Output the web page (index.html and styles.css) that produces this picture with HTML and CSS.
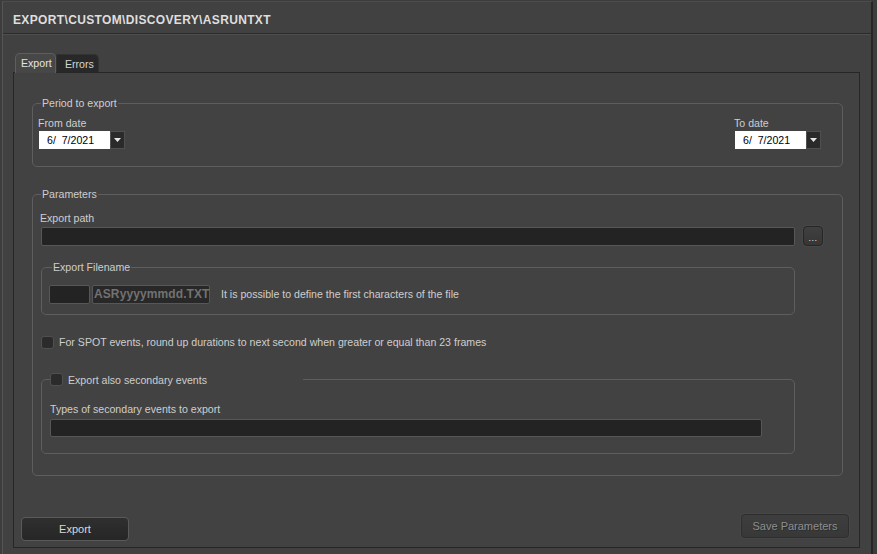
FILE: index.html
```html
<!DOCTYPE html>
<html>
<head>
<meta charset="utf-8">
<link rel="stylesheet" href="styles.css">
</head>
<body>
<div class="win">
  <div class="titlebar"><span class="title">EXPORT\CUSTOM\DISCOVERY\ASRUNTXT</span></div>
  <div class="content">
    <div class="tabs">
      <div class="tab active">Export</div>
      <div class="tab">Errors</div>
    </div>
    <div class="panel">
      <fieldset class="group period">
        <legend>Period to export</legend>
        <div class="period-row">
          <div class="datefield">
            <div class="lbl">From date</div>
            <div class="date"><span class="date-val">6/&nbsp;&nbsp;7/2021</span><span class="date-btn"><svg width="7" height="4" viewBox="0 0 7 4"><path d="M0 0H7L3.5 4Z" fill="#e6e6e6"/></svg></span></div>
          </div>
          <div class="datefield">
            <div class="lbl">To date</div>
            <div class="date"><span class="date-val">6/&nbsp;&nbsp;7/2021</span><span class="date-btn"><svg width="7" height="4" viewBox="0 0 7 4"><path d="M0 0H7L3.5 4Z" fill="#e6e6e6"/></svg></span></div>
          </div>
        </div>
      </fieldset>
      <fieldset class="group params">
        <legend>Parameters</legend>
        <div class="lbl">Export path</div>
        <div class="path-row">
          <div class="input path"></div>
          <div class="browse">...</div>
        </div>
        <fieldset class="group filename">
          <legend>Export Filename</legend>
          <div class="fn-row">
            <div class="input prefix"></div>
            <div class="input pattern">ASRyyyymmdd.TXT</div>
            <span class="hint">It is possible to define the first characters of the file</span>
          </div>
        </fieldset>
        <div class="check spot"><span class="box"></span><span>For SPOT events, round up durations to next second when greater or equal than 23 frames</span></div>
        <fieldset class="group secondary">
          <legend><span class="box"></span><span>Export also secondary events</span></legend>
          <div class="lbl types-lbl">Types of secondary events to export</div>
          <div class="input types"></div>
        </fieldset>
      </fieldset>
      <div class="actions">
        <div class="btn export">Export</div>
        <div class="btn save">Save Parameters</div>
      </div>
    </div>
  </div>
</div>
</body>
</html>
```
FILE: styles.css
```css
* { box-sizing: border-box; }
body {
  margin: 0;
  background: #3d3d3d;
  font: 10.6px/13px "Liberation Sans", Arial, sans-serif;
  color: #cecece;
  overflow: hidden;
}
.win {
  margin: 1px 0 0 2px;
  width: 871px;
  height: 553px;
  background: #414141;
  border-left: 1px solid #555;
  border-top: 1px solid #4c4c4c;
  border-right: 2px solid #262626;
  display: flex;
  flex-direction: column;
}
.titlebar {
  height: 32px;
  border-bottom: 1px solid #2b2b2b;
  box-shadow: 0 1px 0 #4e4e4e;
  padding: 11px 0 0 10px;
}
.title {
  font: bold 12px/14px "Liberation Sans", Arial, sans-serif;
  color: #dedede;
  letter-spacing: 0.35px;
}
.content {
  flex: 1;
  display: flex;
  flex-direction: column;
  padding: 19px 11px 6px 10px;
}
.tabs {
  display: flex;
  align-items: flex-end;
  padding-left: 2px;
  height: 19px;
  position: relative;
  z-index: 1;
}
.tab {
  height: 18px;
  width: 43px;
  padding: 3px 0 0 8px;
  background: #282828;
  border: 1px solid #333;
  border-bottom: none;
  border-radius: 0 5px 0 0;
  color: #d6d6d6;
}
.tab.active {
  width: 41px;
  height: 20px;
  margin-bottom: -1px;
  padding: 3px 0 0 5px;
  background: #474747;
  border: 1px solid #5e5e5e;
  border-bottom: none;
  border-radius: 5px 5px 0 0;
  color: #e4e4e4;
}
.panel {
  flex: 1;
  border: 1px solid #262626;
  background: #424242;
  display: flex;
  flex-direction: column;
  padding: 24px 0 5px 0;
}
.group {
  margin: 0;
  border: 1px solid #5e5e5e;
  border-radius: 5px;
  min-width: 0;
}
.group > legend {
  padding: 0 1px;
  line-height: 12px;
  color: #cecece;
}
.period {
  margin: 0 16px 0 18px;
  padding: 8px 21px 17px 5px;
}
.period > legend { margin-left: 3px; }
.period-row {
  display: flex;
  justify-content: space-between;
}
.datefield .lbl { margin-bottom: 1px; }
.date {
  display: flex;
  height: 18px;
  margin-left: 1px;
}
.date-val {
  width: 71px;
  background: #fff;
  color: #000;
  padding: 3px 0 0 8px;
  line-height: 13px;
}
.date-btn {
  width: 15px;
  background: #2a2a2a;
  border: 1px solid #505050;
  display: flex;
  align-items: center;
  justify-content: center;
}
.params {
  margin: 21px 16px 0 18px;
  padding: 12px 19px 21px 8px;
}
.params > legend { margin-left: 0; }
.params > .lbl { margin-left: -1px; }
.path-row {
  display: flex;
  gap: 8px;
  margin-top: 2px;
  align-items: flex-start;
}
.input {
  background: #232323;
  border: 1px solid #575757;
  border-radius: 2px;
  height: 19px;
}
.path { flex: 1; }
.browse {
  width: 20px;
  height: 20px;
  margin-top: -1px;
  background: linear-gradient(#404040, #363636);
  border: 1px solid #262626;
  border-radius: 4px;
  box-shadow: 0 0 0 1px #484848;
  color: #e0e0e0;
  font-size: 9px;
  line-height: 9px;
  text-align: center;
  padding-top: 7px;
  letter-spacing: 0.5px;
}
.filename {
  margin: 15px 28px 0 0;
  padding: 12px 8px 10px 7px;
}
.filename > legend { margin-left: 3px; }
.fn-row {
  display: flex;
  align-items: center;
  gap: 2px;
}
.prefix { width: 41px; }
.pattern {
  width: 118px;
  font-weight: bold;
  color: #727272;
  font-size: 12px;
  line-height: 17px;
  padding-left: 1px;
  letter-spacing: 0.1px;
  background: #282828;
}
.hint { margin-left: 9px; }
.box {
  display: inline-block;
  width: 13px;
  height: 13px;
  background: #2b2b2b;
  border: 1px solid #505050;
  border-radius: 3px;
  flex: none;
}
.check {
  display: flex;
  align-items: center;
  gap: 5px;
  margin-top: 20px;
  height: 14px;
}
.secondary {
  margin: 23px 28px 0 0;
  padding: 13px 32px 16px 8px;
}
.secondary > legend {
  display: flex;
  align-items: center;
  gap: 5px;
  width: 253px;
  height: 15px;
  margin-left: 0;
  padding: 0;
}
.types-lbl { margin-top: 3px; }
.types { margin-top: 3px; height: 18px; }
.actions {
  margin-top: auto;
  display: flex;
  justify-content: space-between;
  align-items: flex-end;
  padding: 0 10px 1px 7px;
}
.btn {
  height: 24px;
  width: 108px;
  border-radius: 4px;
  text-align: center;
  line-height: 22px;
  font-size: 11px;
}
.btn.export {
  background: linear-gradient(#2f2f2f, #262626);
  border: 1px solid #5a5a5a;
  color: #d8d8d8;
}
.btn.save {
  margin-bottom: 3px;
  background: linear-gradient(#3e3e3e, #383838);
  border: 1px solid #2e2e2e;
  box-shadow: 0 0 0 1px #474747;
  color: #8e8e8e;
  text-shadow: 1px 1px 0 #2c2c2c;
}
```
